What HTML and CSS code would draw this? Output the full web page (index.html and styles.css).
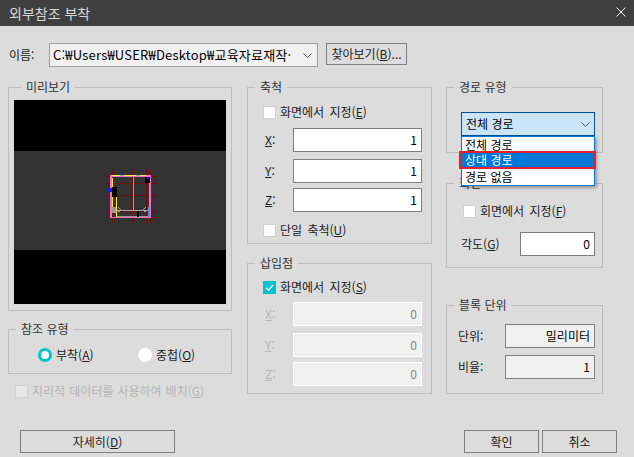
FILE: index.html
```html
<!DOCTYPE html>
<html lang="ko">
<head>
<meta charset="utf-8">
<title>외부참조 부착</title>
<link rel="stylesheet" href="styles.css">
</head>
<body>
<div class="dialog">
  <header class="titlebar">
    <span class="title">외부참조 부착</span>
    <svg class="close" width="10" height="10" viewBox="0 0 10 10"><path d="M0.5 0.5L9.5 9.5M9.5 0.5L0.5 9.5" stroke="#f0f0f0" stroke-width="1" fill="none"/></svg>
  </header>

  <div class="name-row">
    <span class="name-label">이름:</span>
    <div class="name-combo">
      <span class="path">C:₩Users₩USER₩Desktop₩교육자료재작·</span>
      <svg class="chev" width="9" height="5" viewBox="0 0 9 5"><path d="M0.5 0.5L4.5 4.5L8.5 0.5" stroke="#555" fill="none"/></svg>
    </div>
    <button class="btn browse">찾아보기(<u>B</u>)...</button>
  </div>

  <div class="main">
    <div class="col col-left">
      <fieldset class="group g-preview">
        <legend>미리보기</legend>
        <svg class="preview" width="212" height="204" viewBox="0 0 212 204" shape-rendering="crispEdges">
          <rect width="212" height="204" fill="#000"/>
          <rect y="51" width="212" height="99" fill="#333"/>
          <g fill="#6e0f0f">
            <rect x="98" y="69" width="1" height="54"/><rect x="118" y="69" width="1" height="54"/>
            <rect x="132" y="69" width="1" height="54"/><rect x="136" y="69" width="1" height="54"/>
            <rect x="92" y="76" width="51" height="1"/><rect x="92" y="83" width="51" height="1"/>
            <rect x="92" y="95" width="51" height="1"/><rect x="92" y="111" width="51" height="1"/>
            <rect x="92" y="117" width="51" height="1"/>
          </g>
          <rect x="119" y="77" width="1" height="33" fill="#7f9fe8"/>
          <rect x="103" y="110" width="32" height="1" fill="#aaa"/>
          <rect x="103" y="116" width="32" height="1" fill="#998"/>
          <rect x="96" y="75" width="41" height="2" fill="#ff6ec7"/>
          <rect x="98" y="75" width="34" height="1" fill="#ffe24a"/>
          <rect x="96" y="75" width="2" height="43" fill="#ff6ec7"/>
          <rect x="135" y="75" width="2" height="43" fill="#ff6ec7"/>
          <rect x="96" y="117" width="41" height="1" fill="#ff6ec7"/>
          <rect x="98" y="78" width="1" height="30" fill="#ffe24a"/>
          <rect x="102" y="95" width="1" height="22" fill="#ffe24a"/>
          <rect x="98" y="87" width="5" height="10" fill="#000"/>
          <rect x="94" y="88" width="4" height="4" fill="#1a1ae0"/>
          <rect x="106" y="75" width="4" height="1" fill="#8ab"/>
          <rect x="122" y="75" width="4" height="1" fill="#8ab"/>
          <rect x="98" y="107" width="4" height="6" fill="#999"/>
          <rect x="123" y="111" width="2" height="6" fill="#000"/>
          <rect x="131" y="77" width="5" height="6" fill="#000"/>
          <rect x="133" y="77" width="2" height="2" fill="#1a1ae0"/>
          <rect x="135" y="85" width="1" height="12" fill="#7f9fe8"/>
          <rect x="134" y="107" width="2" height="10" fill="#2ad"/>
          <path d="M104 107L108 111M104 112L108 110M132 107L128 111M132 112L128 110" stroke="#8aa" fill="none"/>
        </svg>
      </fieldset>
      <fieldset class="group g-type">
        <legend>참조 유형</legend>
        <div class="radios">
          <label class="radio-item"><span class="radio on"></span><span>부착(<u>A</u>)</span></label>
          <label class="radio-item"><span class="radio"></span><span>중첩(<u>O</u>)</span></label>
        </div>
      </fieldset>
      <div class="geo"><span class="check dim"></span><span class="muted">지리적 데이터를 사용하여 배치(<u>G</u>)</span></div>
    </div>

    <div class="col col-mid">
      <fieldset class="group g-scale">
        <legend>축척</legend>
        <div class="check-row scale-top"><span class="check"></span><span>화면에서 지정(<u>E</u>)</span></div>
        <div class="field-row first"><span class="axis"><u>X</u>:</span><div class="field">1</div></div>
        <div class="field-row"><span class="axis"><u>Y</u>:</span><div class="field">1</div></div>
        <div class="field-row tight"><span class="axis"><u>Z</u>:</span><div class="field">1</div></div>
        <div class="check-row last"><span class="check"></span><span>단일 축척(<u>U</u>)</span></div>
      </fieldset>
      <fieldset class="group g-insert">
        <legend>삽입점</legend>
        <div class="check-row">
          <span class="check checked"><svg width="13" height="13" viewBox="0 0 13 13"><path d="M3 6.8L5.4 9.2L10.2 4" stroke="#fff" stroke-width="1.4" fill="none"/></svg></span><span>화면에서 지정(<u>S</u>)</span>
        </div>
        <div class="field-row"><span class="axis muted"><u>X</u>:</span><div class="field off">0</div></div>
        <div class="field-row"><span class="axis muted"><u>Y</u>:</span><div class="field off">0</div></div>
        <div class="field-row tight"><span class="axis muted"><u>Z</u>:</span><div class="field off">0</div></div>
      </fieldset>
    </div>

    <div class="col col-right">
      <fieldset class="group g-path">
        <legend>경로 유형</legend>
        <div class="path-combo">
          <span>전체 경로</span>
          <svg width="9" height="5" viewBox="0 0 9 5"><path d="M0.5 0.5L4.5 4.5L8.5 0.5" stroke="#555" fill="none"/></svg>
        </div>
      </fieldset>
      <fieldset class="group g-rotate">
        <legend>회전</legend>
        <div class="check-row rotate-top"><span class="check"></span><span>회면에서 지정(<u>F</u>)</span></div>
        <div class="angle-row"><span>각도(<u>G</u>)</span><div class="field angle">0</div></div>
      </fieldset>
      <fieldset class="group g-unit">
        <legend>블록 단위</legend>
        <div class="unit-row first"><span>단위:</span><div class="field unit">밀리미터</div></div>
        <div class="unit-row"><span>비율:</span><div class="field unit">1</div></div>
      </fieldset>
      <ul class="dropdown">
        <li>전체 경로</li>
        <li class="selected">상대 경로</li>
        <li>경로 없음</li>
      </ul>
    </div>
  </div>

  <footer class="footer">
    <button class="btn details">자세히(<u>D</u>)</button>
    <div class="actions">
      <button class="btn action">확인</button>
      <button class="btn action">취소</button>
    </div>
  </footer>
</div>
</body>
</html>
```

FILE: styles.css
```css
* { box-sizing: border-box; }
html, body { margin: 0; padding: 0; }
body {
  width: 634px;
  height: 457px;
  overflow: hidden;
  background: #dcdcdc;
  color: #222;
  font: 12px/16px "Noto Sans CJK KR", "Noto Sans", sans-serif;
}
.dialog { display: flex; flex-direction: column; height: 457px; }
.titlebar {
  height: 26px;
  flex: none;
  background: #404040;
  color: #d8d8d8;
  font-size: 14px;
  padding: 0 9px;
  display: flex;
  align-items: center;
  justify-content: space-between;
}
.close { margin-right: -1px; margin-top: -3px; }

.name-row {
  display: flex;
  align-items: flex-start;
  margin-top: 17px;
  padding-left: 9px;
  height: 36px;
}
.name-label { width: 40px; line-height: 24px; }
.name-combo {
  width: 269px;
  height: 24px;
  background: #f0f0f0;
  border: 1px solid #a0a0a0;
  display: flex;
  align-items: center;
  justify-content: space-between;
  padding: 0 5px 0 3px;
  white-space: nowrap;
  color: #000;
}
.path { font-size: 13px; letter-spacing: 0.2px; }
.chev { flex: none; margin-left: 2px; }
.btn {
  background: #dcdcdc;
  border: 1px solid #7f7f7f;
  color: #222;
  font: inherit;
  padding: 0;
  margin: 0;
}
.browse { width: 81px; height: 22px; margin-left: 8px; }

.main { display: flex; padding-left: 8px; flex: none; height: 351px; }
.col { position: relative; display: flex; flex-direction: column; }
.col-left { width: 224px; }
.col-mid { width: 185px; margin-left: 15px; }
.col-right { width: 157px; margin-left: 14px; }

.group {
  margin: 0;
  padding: 0;
  border: 1px solid #bcbcbc;
  min-width: 0;
  flex: none;
}
.group legend {
  margin-left: 7px;
  padding: 0 5px;
  line-height: 16px;
  color: #333;
}

.g-preview { height: 232px; padding: 5px 0 0 5px; }
.preview { display: block; }
.g-type { height: 53px; margin-top: 10px; }
.radios { display: flex; padding: 10px 0 0 29px; }
.radio-item { display: flex; align-items: center; flex: none; width: 100px; gap: 4px; }
.radio {
  width: 14px;
  height: 14px;
  border-radius: 50%;
  background: #fff;
  flex: none;
}
.radio.on { border: 3px solid #00c4cc; }
.geo { display: flex; align-items: center; gap: 4px; margin: 9px 0 0 7px; word-spacing: 0.7px; }
.muted { color: #b4b4b4; }

.check {
  width: 13px;
  height: 13px;
  background: #fff;
  border: 1px solid #d0d0d0;
  flex: none;
  display: block;
}
.check.dim { background: #e8e8e8; }
.check.checked { background: #00c4cc; border: none; }
.check.checked svg { display: block; }

.check-row { display: flex; align-items: center; gap: 4px; height: 16px; margin: 8px 0 0 15px; word-spacing: 2px; }
.check-row.scale-top { margin-top: 9px; }
.check-row.rotate-top { margin: 12px 0 0 16px; }
.check-row.last { margin-top: 10px; }

.g-scale { height: 165px; }
.g-insert { height: 139px; margin-top: 11px; }
.field-row { display: flex; align-items: center; margin: 7px 9px 0 17px; }
.field-row.first { margin-top: 8px; }
.field-row.tight { margin-top: 5px; }
.axis { width: 28px; }
.field {
  height: 24px;
  background: #fff;
  border: 1px solid #7f7f7f;
  text-align: right;
  line-height: 22px;
  padding-right: 4px;
  color: #000;
}
.field-row .field { width: 129px; }
.field.off { background: #f0f0f0; border-color: #fff; color: #888; }

.g-path { height: 74px; }
.path-combo {
  margin: 17px 7px 0 14px;
  height: 24px;
  background: #cce4f7;
  border: 1px solid #005499;
  display: flex;
  align-items: center;
  justify-content: space-between;
  padding: 0 4px;
  color: #000;
}
.g-rotate { height: 93px; margin-top: 22px; }
.angle-row { display: flex; align-items: center; justify-content: space-between; margin: 13px 7px 0 14px; }
.field.angle { width: 75px; }
.g-unit { height: 97px; margin-top: 29px; }
.unit-row { display: flex; align-items: center; justify-content: space-between; margin: 7px 7px 0 11px; }
.unit-row.first { margin-top: 11px; }
.field.unit { width: 90px; background: #f0f0f0; }

.dropdown {
  position: absolute;
  left: 15px;
  top: 57px;
  width: 134px;
  margin: 0;
  padding: 0;
  list-style: none;
  background: #fff;
  border: 1px solid #0078d7;
  box-shadow: 2px 2px 3px rgba(0, 0, 0, 0.3);
  color: #000;
}
.dropdown li { height: 16px; line-height: 16px; padding-left: 3px; position: relative; }
.dropdown li.selected {
  height: 18px;
  margin: -2px -2px 0 -3px;
  padding-left: 4px;
  line-height: 14px;
  background: #0078d7;
  color: #fff;
  border: 2px solid #e0202c;
}

.footer {
  display: flex;
  justify-content: space-between;
  padding: 0 17px 0 20px;
  flex: none;
}
.details { width: 155px; height: 23px; }
.actions { display: flex; gap: 3px; }
.action { width: 75px; height: 23px; }
```
